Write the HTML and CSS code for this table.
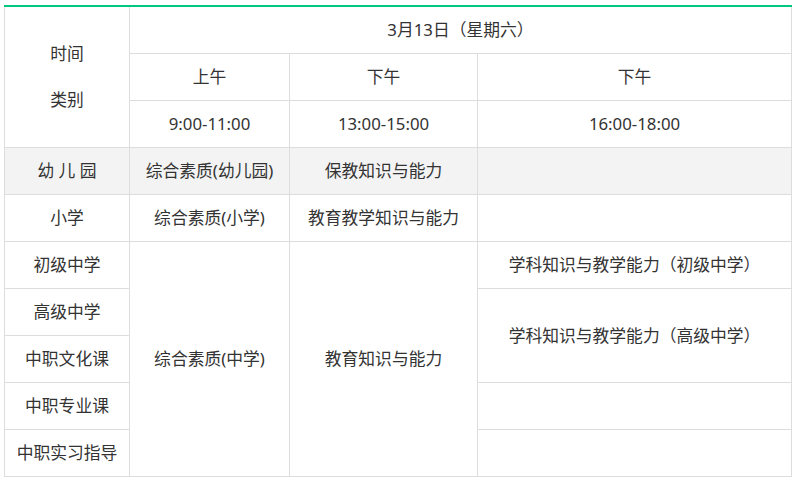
FILE: index.html
```html
<!DOCTYPE html>
<html lang="zh">
<head>
<meta charset="utf-8">
<link rel="stylesheet" href="styles.css">
</head>
<body>
<div class="wrap">
<table class="sched">
  <colgroup>
    <col class="c1"><col class="c2"><col class="c3"><col class="c4">
  </colgroup>
  <tr>
    <td rowspan="3" class="corner"><div class="corner-line">时间</div><div class="corner-line">类别</div></td>
    <td colspan="3">3月13日（星期六）</td>
  </tr>
  <tr>
    <td>上午</td><td>下午</td><td>下午</td>
  </tr>
  <tr>
    <td>9:00-11:00</td><td>13:00-15:00</td><td>16:00-18:00</td>
  </tr>
  <tr class="shade">
    <td>幼 儿 园</td><td>综合素质(幼儿园)</td><td>保教知识与能力</td><td></td>
  </tr>
  <tr>
    <td>小学</td><td>综合素质(小学)</td><td>教育教学知识与能力</td><td></td>
  </tr>
  <tr>
    <td>初级中学</td>
    <td rowspan="5">综合素质(中学)</td>
    <td rowspan="5">教育知识与能力</td>
    <td>学科知识与教学能力（初级中学）</td>
  </tr>
  <tr>
    <td>高级中学</td>
    <td rowspan="2">学科知识与教学能力（高级中学）</td>
  </tr>
  <tr>
    <td>中职文化课</td>
  </tr>
  <tr>
    <td>中职专业课</td><td></td>
  </tr>
  <tr>
    <td>中职实习指导</td><td></td>
  </tr>
</table>
</div>
</body>
</html>
```
FILE: styles.css
```css
html, body {
  margin: 0;
  padding: 0;
  background: #ffffff;
}
.wrap {
  padding: 5px 0 0 4px;
}
.sched {
  border-collapse: collapse;
  table-layout: fixed;
  width: 787px;
  border-top: 2px solid #00c97f;
  font-family: "Noto Sans", "Noto Sans CJK SC", sans-serif;
  font-size: 16.8px;
  color: #333333;
}
.c1 { width: 125px; }
.c2 { width: 160px; }
.c3 { width: 188px; }
.c4 { width: 314px; }
.sched td {
  border: 1px solid #dddddd;
  height: 46px;
  padding: 0;
  text-align: center;
  vertical-align: middle;
  line-height: 22px;
}
.sched tr:first-child td {
  border-top: 2px solid #00c97f;
}
.shade td {
  background: #f3f3f3;
}
.corner-line {
  line-height: 46px;
}
```
